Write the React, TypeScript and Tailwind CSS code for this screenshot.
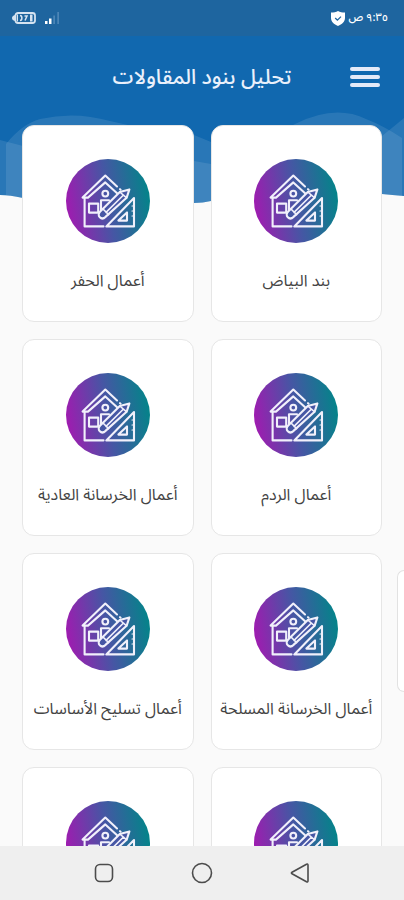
const items = [
  { id: 1, title: "بند البياض" },
  { id: 2, title: "أعمال الحفر" },
  { id: 3, title: "أعمال الردم" },
  { id: 4, title: "أعمال الخرسانة العادية" },
  { id: 5, title: "أعمال الخرسانة المسلحة" },
  { id: 6, title: "أعمال تسليح الأساسات" },
  { id: 7, title: "" },
  { id: 8, title: "" },
];

const HouseIcon = () => {
  return (
    <svg viewBox="0 0 84 84" className="w-[84px] h-[84px] shrink-0" fill="none" aria-hidden="true">
      <defs>
        <linearGradient id="iconGradient" x1="0" y1="0.58" x2="1" y2="0.42">
          <stop offset="0" stopColor="#a01bb0" />
          <stop offset="0.5" stopColor="#4656a4" />
          <stop offset="1" stopColor="#038489" />
        </linearGradient>
      </defs>
      <circle cx="42" cy="42" r="42" fill="url(#iconGradient)" />
      <g stroke="#f1f0fb" strokeWidth="2.1" strokeLinejoin="round" strokeLinecap="round">
        {/* house */}
        <path d="M51 27.5 39.3 16.6 16.6 38.6H22L39.3 23.4 53 36" />
        <path d="M54 30.2l.6.5" />
        <path d="M18.6 39v28.4H37.5" />
        <circle cx="39.3" cy="34.6" r="2.9" />
        <path d="M23 44.6h9.2v9H23z" />
        <path d="M43 41.2H35v10" />
        {/* set square */}
        <path d="M68 39 40.3 67.4H68z" />
        <path d="M61 53.4v8.2h-8.6z" />
        <path d="M66 47h2M66 52h2M66 57h2" strokeWidth="1.2" />
        {/* pencil */}
        <path
          d="M63.4 30.4l-9.6 2.6-19.6 19.6c-1.9 1.9-1.9 4.200-.4 5.700s3.800 1.500 5.700-.4L60.600 38.800z"
          fill="#4656a4"
        />
        <path d="M53.8 33l6.800 5.800M37 50l5.600 5.600M57.500 36 40 53.400" strokeWidth="1.6" />
      </g>
    </svg>
  );
};

const StatusBar = () => {
  return (
    <div className="h-9 shrink-0 bg-[#1e659f] pl-3 pr-4 flex items-center justify-between text-white">
      <div className="flex items-center gap-1">
        <span className="text-[11px] leading-4 font-medium">٩:٣٥ ص</span>
        <svg viewBox="0 0 14 15" className="w-[14px] h-[15px]" aria-hidden="true">
          <path d="M7 0c2 1.200 4.200 1.600 7 1.600v5.200c0 4-3 6.600-7 8.200C3 13.400 0 10.800 0 6.800V1.600C2.800 1.600 5 1.200 7 0z" fill="#fff" />
          <path d="M4.200 7l2.200 2.200L10 5.600" stroke="#1e659f" strokeWidth="1.300" fill="none" />
        </svg>
      </div>
      <div className="flex items-center gap-2" dir="ltr">
        <svg viewBox="0 0 24 12" className="w-6 h-3" fill="none" aria-hidden="true">
          <rect x="3.500" y="1" width="19.500" height="10" rx="2.500" stroke="#d5e3f1" strokeWidth="1.800" />
          <path d="M0 6c0-1.500 1-2.500 3-3v6C1 8.500 0 7.500 0 6z" fill="#d5e3f1" />
          <path d="M5 2.500h1v7H5zM18 2.500h2.500v7H18z" fill="#d5e3f1" />
          <path d="M8 3.500c2.500 0 2.500 5 0 5M12.500 4h2.500l-2 4.500" stroke="#d5e3f1" strokeWidth="1.500" />
        </svg>
        <svg viewBox="0 0 16 12" className="w-4 h-3" aria-hidden="true">
          <path d="M1 9h2.500v3H1zM5 6.500h2.500V12H5z" fill="#fff" />
          <path d="M9.500 3.500h1.200V12H9.500zM13.500 0h1.200v12h-1.200z" fill="#5f93c1" />
        </svg>
      </div>
    </div>
  );
};

const Waves = () => {
  return (
    <svg
      viewBox="0 0 404 170"
      preserveAspectRatio="none"
      className="absolute inset-x-0 top-0 w-full h-[170px]"
      aria-hidden="true"
    >
      <clipPath id="headerShape">
        <path d="M0 0H404V160Q392 159 382 158Q300 152 211 165Q203 167 194 167Q110 170 23 162Q10 159 0 159z" />
      </clipPath>
      <g clipPath="url(#headerShape)">
        <path d="M0 0H404V170H0z" fill="#1168af" />
        <path
          d="M6 170V108Q22 88 40 83Q75 75 110 85L128 89Q165 88 194 99L211 106Q255 110 295 88Q335 68 366 83Q384 90 402 102V170z"
          fill="#fff"
          fillOpacity="0.1"
        />
        <path
          d="M0 104L23 110Q110 140 194 125L211 128Q300 140 340 125L382 100Q392 92 404 82V170H0z"
          fill="#fff"
          fillOpacity="0.1"
        />
      </g>
    </svg>
  );
};

const NavBar = () => {
  return (
    <nav className="h-[54px] shrink-0 bg-[#efefef] flex justify-center items-center gap-[70px]" aria-label="النظام">
      <button type="button" aria-label="رجوع" className="w-7 h-7 flex items-center justify-center">
        <svg viewBox="0 0 20 20" className="w-5 h-5" fill="none" stroke="#4c4c4c" strokeWidth="1.6" strokeLinejoin="round">
          <path d="M16.500 1.300Q18 .6 18 2.300v15.400q0 1.700-1.500 1L2 10.800q-1.200-.8 0-1.600z" />
        </svg>
      </button>
      <button type="button" aria-label="الرئيسية" className="w-7 h-7 flex items-center justify-center">
        <svg viewBox="0 0 22 22" className="w-[22px] h-[22px]" fill="none" stroke="#4c4c4c" strokeWidth="1.6">
          <circle cx="11" cy="11" r="9.5" />
        </svg>
      </button>
      <button type="button" aria-label="التطبيقات" className="w-7 h-7 flex items-center justify-center">
        <svg viewBox="0 0 20 20" className="w-5 h-5" fill="none" stroke="#4c4c4c" strokeWidth="1.6">
          <rect x="1.5" y="1.5" width="17" height="17" rx="4.500" />
        </svg>
      </button>
    </nav>
  );
};

const App = () => {
  return (
    <div
      dir="rtl"
      className="h-screen flex flex-col overflow-hidden bg-[#fafafa] font-['Noto_Sans_Arabic','Noto_Sans','DejaVu_Sans',sans-serif]"
    >
      <StatusBar />
      <div className="relative flex-1 min-h-0 overflow-hidden">
        <Waves />
        <header className="relative h-[89px] px-6 pb-2 grid grid-cols-[30px_1fr_30px] items-center">
          <button type="button" aria-label="القائمة" className="flex flex-col gap-1">
            <span className="h-1 w-full rounded-sm bg-[#e4eaf8]" />
            <span className="h-1 w-full rounded-sm bg-[#e4eaf8]" />
            <span className="h-1 w-full rounded-sm bg-[#e4eaf8]" />
          </button>
          <h1 className="text-center text-[21px] leading-8 font-medium text-[#eaf0fb]">تحليل بنود المقاولات</h1>
        </header>
        <main className="relative grid grid-cols-2 gap-[17px] px-[22px]">
          {items.map((item) => (
            <button
              key={item.id}
              type="button"
              className="h-[197px] rounded-xl border border-[#e6e6e6] bg-white pt-[33px] flex flex-col items-center"
            >
              <HouseIcon />
              {item.title && (
                <span className="mt-6 text-base leading-7 whitespace-nowrap text-[#444]">{item.title}</span>
              )}
            </button>
          ))}
        </main>
      </div>
      <div className="fixed right-0 top-[570px] h-[122px] w-[7px] rounded-l-xl border border-r-0 border-[#e2e2e2] bg-white" />
      <NavBar />
    </div>
  );
};

export default App;
